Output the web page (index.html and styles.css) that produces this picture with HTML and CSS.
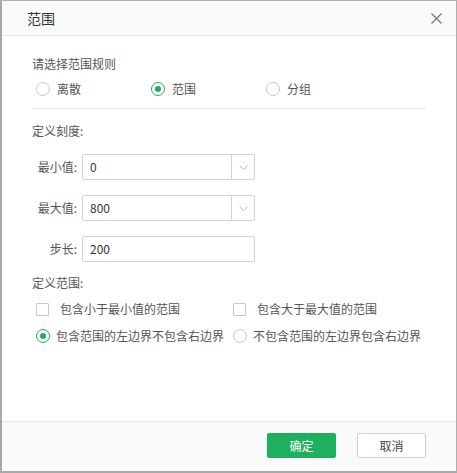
FILE: index.html
```html
<!DOCTYPE html>
<html>
<head>
<meta charset="utf-8">
<link rel="stylesheet" href="styles.css">
</head>
<body>
<div class="dialog">
  <div class="header">
    <span class="title">范围</span>
    <svg class="close" width="11" height="11" viewBox="0 0 11 11"><path d="M0.5 0.5 L10.5 10.5 M10.5 0.5 L0.5 10.5" stroke="#777" stroke-width="1.2" fill="none"/></svg>
  </div>
  <div class="body">
    <div class="section-title first">请选择范围规则</div>
    <div class="radio-row">
      <label class="opt"><span class="radio"></span><span>离散</span></label>
      <label class="opt"><span class="radio checked"></span><span>范围</span></label>
      <label class="opt"><span class="radio"></span><span>分组</span></label>
    </div>
    <div class="divider"></div>
    <div class="section-title second">定义刻度:</div>
    <div class="form">
      <div class="frow">
        <span class="flabel">最小值:</span>
        <div class="field"><span class="val">0</span><span class="drop"><svg width="9" height="5" viewBox="0 0 9 5"><path d="M0.5 0.5 L4.5 4.5 L8.5 0.5" stroke="#bbb" fill="none"/></svg></span></div>
      </div>
      <div class="frow">
        <span class="flabel">最大值:</span>
        <div class="field"><span class="val">800</span><span class="drop"><svg width="9" height="5" viewBox="0 0 9 5"><path d="M0.5 0.5 L4.5 4.5 L8.5 0.5" stroke="#bbb" fill="none"/></svg></span></div>
      </div>
      <div class="frow">
        <span class="flabel">步长:</span>
        <div class="field"><span class="val">200</span></div>
      </div>
    </div>
    <div class="section-title third">定义范围:</div>
    <div class="grid-row check-row">
      <label class="copt"><span class="check"></span><span>包含小于最小值的范围</span></label>
      <label class="copt"><span class="check"></span><span>包含大于最大值的范围</span></label>
    </div>
    <div class="grid-row radio-row2">
      <label class="ropt"><span class="radio checked"></span><span>包含范围的左边界不包含右边界</span></label>
      <label class="ropt"><span class="radio"></span><span>不包含范围的左边界包含右边界</span></label>
    </div>
  </div>
  <div class="footer">
    <button class="btn primary">确定</button>
    <button class="btn">取消</button>
  </div>
</div>
</body>
</html>
```
FILE: styles.css
```css
* { box-sizing: border-box; }
html, body { margin: 0; padding: 0; background: #fff; }
body {
  font-family: "Noto Sans CJK SC", "Noto Sans", sans-serif;
  font-size: 12px;
  color: #555;
}
.dialog {
  width: 457px;
  height: 473px;
  border-top: 1px solid #b0b0b0;
  border-right: 1px solid #b0b0b0;
  border-left: 2px solid #a8a8a8;
  border-bottom: 2px solid #a8a8a8;
  display: flex;
  flex-direction: column;
  background: #fff;
}
.header {
  height: 35px;
  flex: none;
  background: #fafafa;
  border-bottom: 1px solid #e2e7ee;
  display: flex;
  align-items: center;
  justify-content: space-between;
  padding: 0 14px 0 25px;
}
.title { font-size: 14px; color: #333; line-height: 18px; }
.close { display: block; }
.body {
  flex: 1;
  padding: 0 30px;
}
.section-title { line-height: 16px; height: 16px; color: #555; }
.section-title.first { margin-top: 20px; }
.section-title.second { margin-top: 14px; }
.section-title.third { margin-top: 13px; }
.radio-row {
  margin-top: 8px;
  height: 18px;
  display: flex;
  align-items: center;
}
.opt {
  width: 115px;
  display: flex;
  align-items: center;
  gap: 7px;
  padding-left: 4px;
  line-height: 18px;
}
.radio {
  width: 14px;
  height: 14px;
  border-radius: 50%;
  border: 1px solid #c8c8c8;
  background: #fff;
  flex: none;
  display: flex;
  align-items: center;
  justify-content: center;
}
.radio.checked { border-color: #1eaf5f; }
.radio.checked::after {
  content: "";
  width: 6px;
  height: 6px;
  border-radius: 50%;
  background: #1eaf5f;
}
.divider {
  margin-top: 10px;
  height: 1px;
  background: #e6e6e6;
}
.form {
  margin-top: 15px;
  display: flex;
  flex-direction: column;
  gap: 15px;
}
.frow { display: flex; align-items: center; height: 26px; }
.flabel {
  width: 45px;
  text-align: right;
  margin-right: 5px;
  line-height: 16px;
  color: #555;
}
.field {
  width: 173px;
  height: 26px;
  border: 1px solid #d2d2d2;
  border-radius: 2px;
  display: flex;
  align-items: center;
  background: #fff;
}
.val { flex: 1; padding-left: 7px; color: #333; line-height: 16px; }
.drop {
  width: 23px;
  height: 100%;
  border-left: 1px solid #d2d2d2;
  display: flex;
  align-items: center;
  justify-content: center;
}
.drop svg { display: block; }
.grid-row {
  display: grid;
  grid-template-columns: 201px 1fr;
  height: 18px;
  align-items: center;
}
.check-row { margin-top: 9px; }
.radio-row2 { margin-top: 9px; }
.copt {
  display: flex;
  align-items: center;
  gap: 11px;
  padding-left: 4px;
  line-height: 18px;
}
.check {
  width: 13px;
  height: 13px;
  border: 1px solid #c8c8c8;
  border-radius: 1px;
  background: #fff;
  flex: none;
}
.ropt {
  display: flex;
  align-items: center;
  gap: 6px;
  padding-left: 4px;
  line-height: 18px;
  white-space: nowrap;
}
.grid-row .ropt:nth-child(2), .grid-row .copt:nth-child(2) { padding-left: 0; }
.footer {
  height: 50px;
  flex: none;
  background: #fafafa;
  border-top: 1px solid #e6e6e6;
  display: flex;
  justify-content: flex-end;
  align-items: flex-start;
  padding: 11px 30px 0 0;
  gap: 21px;
}
.btn {
  width: 69px;
  height: 25px;
  border: 1px solid #cfcfcf;
  border-radius: 2px;
  background: #fff;
  color: #444;
  font-family: "Noto Sans CJK SC", "Noto Sans", sans-serif;
  font-size: 12px;
  padding: 0;
  line-height: 23px;
}
.btn.primary {
  background: #1eaf5f;
  border-color: #1eaf5f;
  color: #fff;
}
```
